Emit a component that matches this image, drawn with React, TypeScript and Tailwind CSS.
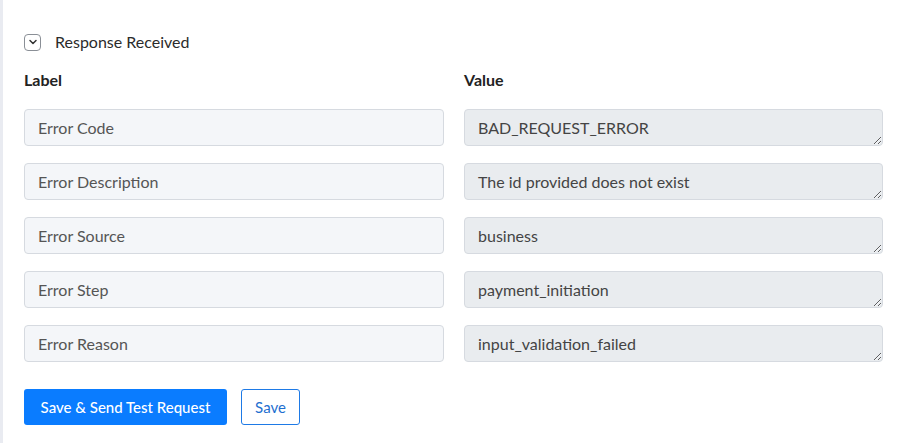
import React from "react";

const rows: [string, string][] = [
  ["Error Code", "BAD_REQUEST_ERROR"],
  ["Error Description", "The id provided does not exist"],
  ["Error Source", "business"],
  ["Error Step", "payment_initiation"],
  ["Error Reason", "input_validation_failed"],
];

export default function App() {
  return (
    <div
      className="flex h-[443px] w-[912px] bg-white text-[#333]"
      style={{ fontFamily: "Lato, 'Open Sans', sans-serif" }}
    >
      <div className="w-[3px] shrink-0 bg-[#e9ebf1]" />
      <div className="flex w-[880px] flex-col pl-[21px] pt-[33px]">
        <div className="flex h-[18px] items-center">
          <span className="flex h-[17px] w-[17px] items-center justify-center rounded-[4px] border border-[#8a8f96] bg-white">
            <svg width="10" height="10" viewBox="0 0 10 10" fill="none">
              <path d="M2 3.5 L5 6.5 L8 3.5" stroke="#333" strokeWidth="1.5" strokeLinecap="round" strokeLinejoin="round" />
            </svg>
          </span>
          <span className="ml-[14px] text-[16px] leading-[18px] text-[#2b2b2b]">Response Received</span>
        </div>

        <div className="mt-[19px] grid grid-cols-[420px_419px] gap-x-[20px]">
          <div className="text-[16px] font-bold leading-[20px] text-[#222]">Label</div>
          <div className="text-[16px] font-bold leading-[20px] text-[#222]">Value</div>
        </div>

        <div className="mt-[19px] flex flex-col gap-[17px]">
          {rows.map(([label, value]) => (
            <div key={label} className="grid grid-cols-[420px_419px] gap-x-[20px]">
              <input
                readOnly
                value={label}
                className="h-[37px] rounded-[4px] border border-[#d6dae0] bg-[#f4f6f9] px-[13px] text-[16px] text-[#555] outline-none"
              />
              <textarea
                readOnly
                rows={1}
                value={value}
                className="block h-[37px] resize-y overflow-hidden rounded-[4px] border border-[#d6dae0] bg-[#e9ecef] px-[13px] py-[8px] text-[16px] leading-[19px] text-[#444] outline-none"
              />
            </div>
          ))}
        </div>

        <div className="mt-[27px] flex items-center gap-[14px]">
          <button className="h-[36px] w-[203px] rounded-[3px] bg-[#0a7cff] text-[15px] font-medium text-white">
            Save &amp; Send Test Request
          </button>
          <button className="h-[36px] w-[59px] rounded-[3px] border border-[#1e7ae6] bg-white text-[15px] text-[#1e6fd0]">
            Save
          </button>
        </div>
      </div>
    </div>
  );
}
